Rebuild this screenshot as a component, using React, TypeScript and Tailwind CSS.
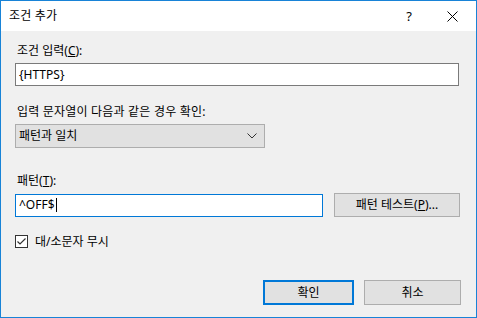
import React from "react";

const font = { fontFamily: '"Noto Sans", "Noto Sans CJK KR", sans-serif' };

export default function App() {
  return (
    <div
      className="w-[477px] h-[318px] border border-[#1883d7] bg-[#f0f0f0] flex flex-col text-[12px] text-black"
      style={font}
    >
      <div className="h-[30px] bg-white flex items-center pl-[8px] pr-[18px] shrink-0">
        <span className="flex-1 leading-none tracking-[0.2px]">조건 추가</span>
        <span className="w-[10px] text-center mr-[33px] leading-none text-[13px]">?</span>
        <svg width="11" height="11" viewBox="0 0 11 11">
          <path d="M0.5 0.5 L10.5 10.5 M10.5 0.5 L0.5 10.5" stroke="#000" strokeWidth="1" />
        </svg>
      </div>
      <div className="flex-1 flex flex-col px-[14px] pt-[11px]">
        <div className="pl-[2px] leading-[18px]">
          조건 입력(<span className="underline">C</span>):
        </div>
        <div className="mt-[3px] w-[444px] h-[23px] bg-white border border-[#7a7a7a] flex items-center pl-[3px] leading-none">
          {"{HTTPS}"}
        </div>
        <div className="mt-[17px] pl-[2px] leading-[18px] tracking-[0.2px]">입력 문자열이 다음과 같은 경우 확인:</div>
        <div className="mt-[3px] w-[250px] h-[24px] bg-[#e1e1e1] border border-[#adadad] flex items-center pl-[3px] pr-[7px]">
          <span className="flex-1 leading-none">패턴과 일치</span>
          <svg width="10" height="6" viewBox="0 0 10 6">
            <path d="M0.5 0.5 L5 5 L9.5 0.5" stroke="#333" strokeWidth="1" fill="none" />
          </svg>
        </div>
        <div className="mt-[24px] pl-[2px] leading-[18px]">
          패턴(<span className="underline">T</span>):
        </div>
        <div className="mt-[3px] flex items-center">
          <div className="w-[308px] h-[23px] bg-white border border-[#0078d7] flex items-center pl-[3px] leading-none">
            ^OFF$<span className="inline-block w-px h-[14px] bg-black ml-[1px]" />
          </div>
          <div className="ml-[11px] w-[126px] h-[24px] bg-[#e1e1e1] border border-[#adadad] flex items-center justify-center leading-none">
            패턴 테스트(<span className="underline">P</span>)...
          </div>
        </div>
        <div className="mt-[18px] flex items-center">
          <div className="w-[13px] h-[13px] border border-[#333] bg-white flex items-center justify-center">
            <svg width="11" height="11" viewBox="0 0 11 11">
              <path d="M1.5 5.5 L4 8 L9.5 2.5" stroke="#333" strokeWidth="1.2" fill="none" />
            </svg>
          </div>
          <span className="ml-[7px] leading-none">대/소문자 무시</span>
        </div>
        <div className="mt-[32px] flex justify-end pr-[1px]">
          <div className="w-[91px] h-[25px] bg-[#e1e1e1] border-2 border-[#0078d7] flex items-center justify-center leading-none">
            확인
          </div>
          <div className="ml-[10px] w-[97px] h-[25px] bg-[#e1e1e1] border border-[#adadad] flex items-center justify-center leading-none">
            취소
          </div>
        </div>
      </div>
    </div>
  );
}
